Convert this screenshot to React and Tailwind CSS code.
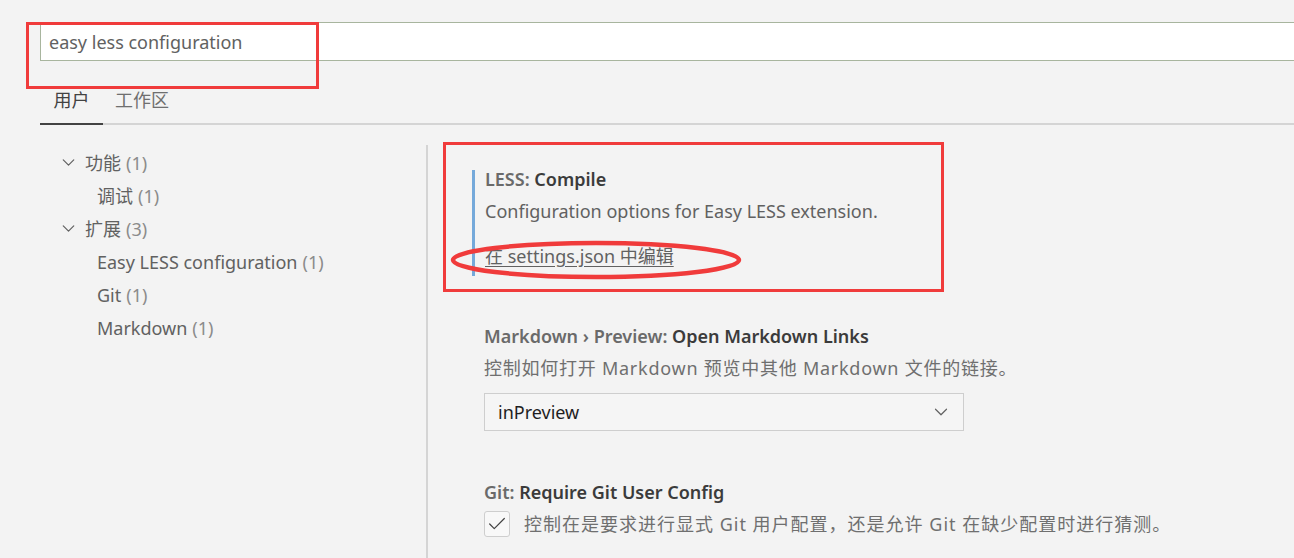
import { ChevronDown, Check } from "lucide-react";

const font = { fontFamily: '"Noto Sans", "Noto Sans CJK SC", sans-serif' };

function TreeItem({ label, count, level }) {
  return (
    <div className={`flex items-center h-[33px] ${level === 0 ? "pl-[58px]" : "pl-[97px]"}`}>
      {level === 0 && <ChevronDown className="w-[21px] h-[21px] mr-[6px] text-[#616161]" strokeWidth={1.4} />}
      <span className="text-[#616161]">{label}</span>
      <span className="ml-[5px] text-[#8b8b8b]">({count})</span>
    </div>
  );
}

export default function App() {
  return (
    <div className="w-[1294px] h-[558px] bg-[#f3f3f3] overflow-hidden text-[18px] leading-none relative" style={font}>
      <div className="pt-[11px] pl-[26px]">
        <div className="relative">
          <div className="absolute left-0 top-0 w-[293px] h-[67px] border-[3px] border-[#f03b3b] z-10" />
          <div className="ml-[14px] mt-[11px] h-[39px] bg-white border border-[#a8b59e] border-r-0 flex items-center pl-[8px] text-[#616161]">
            easy less configuration
          </div>
        </div>
      </div>

      <div className="mt-[26px] ml-[40px] flex border-b-[2px] border-[#d4d4d4] h-[38px]">
        <div className="w-[63px] flex justify-center border-b-[2px] border-[#424242] -mb-[2px] text-[#424242] pt-[4px]">用户</div>
        <div className="ml-[12px] text-[#6f6f6f] pt-[4px]">工作区</div>
      </div>

      <div className="flex">
        <div className="w-[428px] border-r-[2px] border-[#d4d4d4] h-[420px] mt-[20px]">
          <div className="pt-[1px]">
            <TreeItem label="功能" count={1} level={0} />
            <TreeItem label="调试" count={1} level={1} />
            <TreeItem label="扩展" count={3} level={0} />
            <TreeItem label="Easy LESS configuration" count={1} level={1} />
            <TreeItem label="Git" count={1} level={1} />
            <TreeItem label="Markdown" count={1} level={1} />
          </div>
        </div>

        <div className="pl-[15px] pt-[17px] flex-1">
          <div className="relative w-[501px] h-[150px] border-[3px] border-[#f03b3b] pl-[26px] pt-[25px]">
            <div className="border-l-[3px] border-[#75a9da] pl-[10px] h-[106px]">
              <div className="font-semibold text-[#6a6a6a]">
                LESS: <span className="text-[#3b3b3b]">Compile</span>
              </div>
              <div className="mt-[14px] text-[#616161]">Configuration options for Easy LESS extension.</div>
              <div className="mt-[27px] text-[#616161] underline underline-offset-[3px]">在 settings.json 中编辑</div>
            </div>
            <svg className="absolute left-[3px] top-[94px]" width="295" height="42" viewBox="0 0 295 42">
              <ellipse cx="147" cy="21" rx="143" ry="17" fill="none" stroke="#f03b3b" strokeWidth="4.5" />
            </svg>
          </div>

          <div className="pl-[41px] mt-[35px]">
            <div className="font-semibold text-[#6a6a6a]">
              Markdown › Preview: <span className="text-[#3b3b3b]">Open Markdown Links</span>
            </div>
            <div className="mt-[14px] text-[#6f6f6f] tracking-[0.75px]">控制如何打开 Markdown 预览中其他 Markdown 文件的链接。</div>
            <div className="mt-[16px] w-[480px] h-[38px] border border-[#cecece] bg-[#f5f5f5] flex items-center justify-between pl-[13px] pr-[11px]">
              <span className="text-[#1f1f1f]">inPreview</span>
              <ChevronDown className="w-[22px] h-[22px] text-[#616161]" strokeWidth={1.3} />
            </div>

            <div className="mt-[52px] font-semibold text-[#6a6a6a]">
              Git: <span className="text-[#3b3b3b]">Require Git User Config</span>
            </div>
            <div className="mt-[10px] flex items-center">
              <div className="w-[26px] h-[26px] border border-[#cecece] rounded-[3px] bg-[#f8f8f8] flex items-center justify-center">
                <Check className="w-[22px] h-[22px] text-[#424242]" strokeWidth={1.3} />
              </div>
              <span className="ml-[14px] text-[#6f6f6f] tracking-[1px]">控制在是要求进行显式 Git 用户配置，还是允许 Git 在缺少配置时进行猜测。</span>
            </div>
          </div>
        </div>
      </div>
    </div>
  );
}
